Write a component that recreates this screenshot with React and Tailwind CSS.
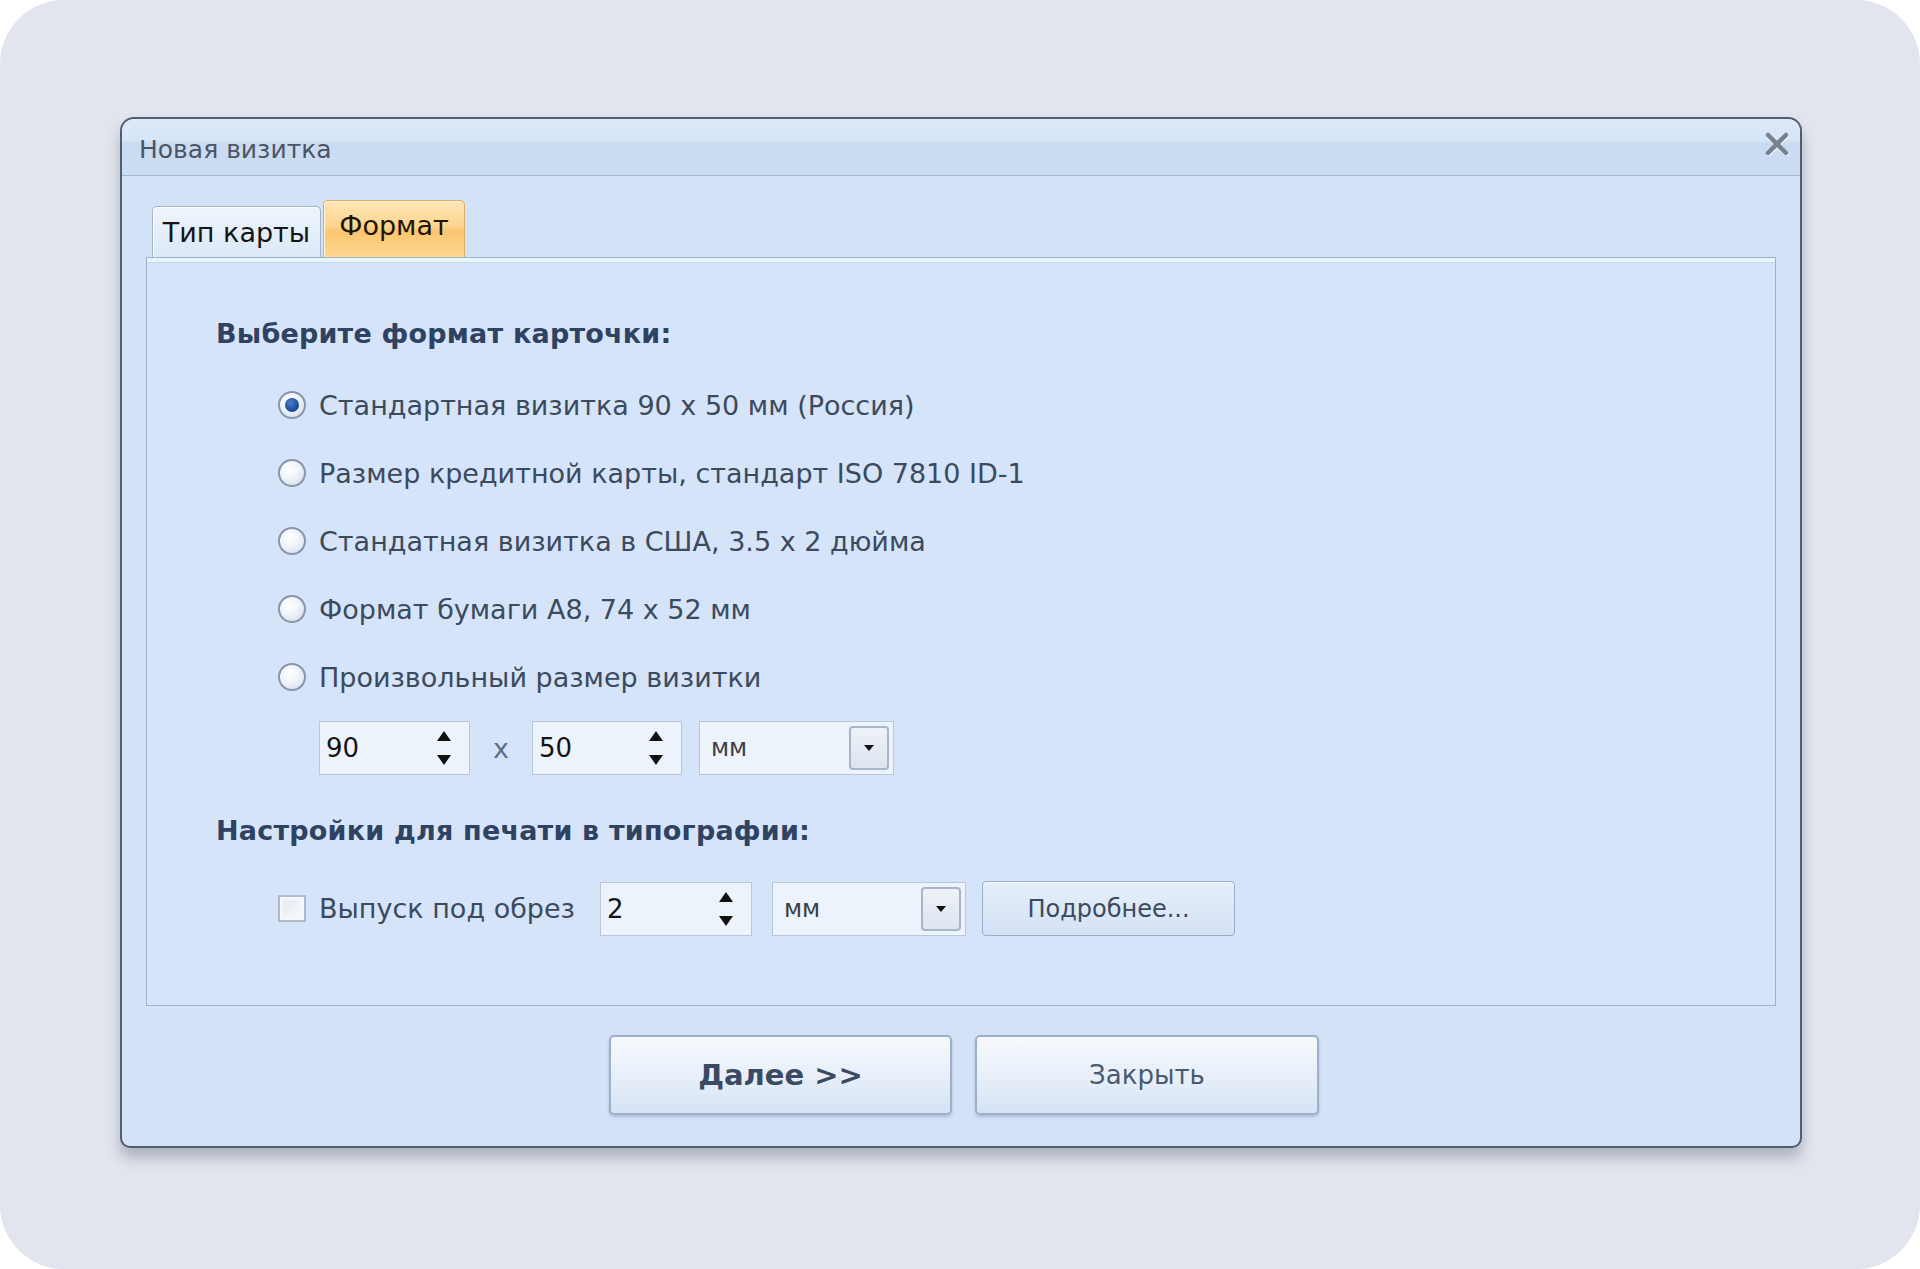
import React from "react";

const UI = { fontFamily: '"DejaVu Sans", Verdana, sans-serif' };

function Radio({ checked }) {
  return (
    <div className="w-[28px] h-[28px] rounded-full border-[2px] border-[#8796aa] bg-[radial-gradient(circle_at_40%_35%,#ffffff_0%,#eef3f9_45%,#cfd9e6_100%)] flex items-center justify-center shrink-0">
      {checked && (
        <div className="w-[14px] h-[14px] rounded-full bg-[radial-gradient(circle_at_40%_35%,#4f7fd0_0%,#1d4c9c_60%,#163d80_100%)]" />
      )}
    </div>
  );
}

function Checkbox() {
  return (
    <div className="w-[28px] h-[27px] border-[2px] border-[#b2bbc7] bg-[#f4f7fb] p-[3px] shrink-0">
      <div className="w-full h-full bg-[linear-gradient(135deg,#e4ebf3,#f7f9fc)]" />
    </div>
  );
}

function SpinArrows() {
  return (
    <svg width="18" height="38" viewBox="0 0 18 38" className="shrink-0">
      <path d="M9 2 L16 12 L2 12 Z" fill="#111" />
      <path d="M2 26 L16 26 L9 36 Z" fill="#111" />
    </svg>
  );
}

function Spin({ value, width }) {
  return (
    <div
      className={`h-[54px] ${width} border border-[#b7c6d9] bg-[#edf3fb] flex items-center justify-between pl-[6px] pr-[16px]`}
    >
      <span className="text-[26px] text-[#141414] leading-none">{value}</span>
      <SpinArrows />
    </div>
  );
}

function Combo({ value, width }) {
  return (
    <div
      className={`h-[54px] ${width} border border-[#b7c6d9] bg-[#edf3fb] flex items-center justify-between pl-[11px] pr-[4px]`}
    >
      <span className="text-[24px] text-[#3a3f48] leading-none">{value}</span>
      <div className="w-[40px] h-[44px] rounded-[4px] border-[2px] border-[#a9b6c7] bg-[linear-gradient(#eef2f8,#dde5ef)] flex items-center justify-center">
        <svg width="10" height="6" viewBox="0 0 10 6">
          <path d="M0 0 L10 0 L5 6 Z" fill="#111" />
        </svg>
      </div>
    </div>
  );
}

const options = [
  { label: "Стандартная визитка 90 x 50 мм (Россия)", checked: true },
  { label: "Размер кредитной карты, стандарт ISO 7810 ID-1" },
  { label: "Стандатная визитка в США, 3.5 x 2 дюйма" },
  { label: "Формат бумаги А8, 74 x 52 мм" },
  { label: "Произвольный размер визитки" },
];

export default function App() {
  return (
    <div className="w-[1920px] h-[1269px] bg-white" style={UI}>
      <div className="w-full h-full rounded-[64px] bg-[#e2e5ee] pt-[117px] pl-[120px]">
        {/* window */}
        <div className="w-[1682px] h-[1031px] rounded-t-[14px] rounded-b-[10px] border-[2px] border-[#4f5e74] bg-[#d3e2f6] shadow-[0_10px_14px_rgba(40,50,70,0.28)] flex flex-col overflow-hidden">
          {/* title bar */}
          <div className="h-[57px] shrink-0 border-b border-[#a3b6cf] bg-[linear-gradient(#dde9f8_0%,#d6e5f7_38%,#c9dbf2_44%,#cddef3_100%)] flex items-center justify-between pl-[17px] pr-[11px]">
            <span className="mt-[4px] text-[25px] text-[#4b5565] leading-none">Новая визитка</span>
            <svg width="24" height="24" viewBox="0 0 24 24" className="mb-[6px]">
              <path d="M3 3 L21 21 M21 3 L3 21" stroke="#ffffff" strokeOpacity="0.7" strokeWidth="5" strokeLinecap="round" transform="translate(0.5 1)" />
              <path d="M3 3 L21 21 M21 3 L3 21" stroke="#78818f" strokeWidth="4.5" strokeLinecap="round" />
            </svg>
          </div>

          {/* body */}
          <div className="flex-1 flex flex-col px-[24px] pt-[24px] pb-[31px]">
            {/* tabs */}
            <div className="h-[57px] flex items-end pl-[6px] shrink-0">
              <div className="h-[51px] w-[169px] rounded-t-[5px] border border-b-0 border-[#a2b4cb] bg-[linear-gradient(#eef5fc,#dbe8f7)] shadow-[inset_1px_1px_0_#ffffff] flex items-center justify-center">
                <span className="text-[27px] text-[#151515] leading-none">Тип карты</span>
              </div>
              <div className="h-[57px] w-[142px] ml-[2px] rounded-t-[5px] border border-b-0 border-[#e3aa5e] bg-[linear-gradient(#fde6b6_0%,#fcd58f_45%,#fbc56f_55%,#fdd892_100%)] shadow-[inset_1px_1px_0_#fff4dc] flex items-start justify-center pt-[11px]">
                <span className="text-[27px] text-[#231505] leading-none">Формат</span>
              </div>
            </div>

            {/* tab page */}
            <div className="h-[749px] shrink-0 border border-[#9fb2cb] bg-[#d5e4f8] shadow-[inset_0_4px_0_#e7f5fd,inset_0_5px_0_#c5d9ee] flex flex-col pl-[69px] pt-[55px]">
              <div className="h-[40px] flex items-center">
                <span className="text-[27px] font-bold tracking-[0.2px] text-[#2f4262] leading-none">
                  Выберите формат карточки:
                </span>
              </div>

              <div className="mt-[18px] flex flex-col pl-[62px]">
                {options.map((o) => (
                  <div key={o.label} className="h-[68px] flex items-center gap-[13px]">
                    <Radio checked={o.checked} />
                    <span className="text-[27px] text-[#3c4a5e] leading-none">{o.label}</span>
                  </div>
                ))}
              </div>

              <div className="mt-[10px] flex items-center pl-[103px]">
                <Spin value="90" width="w-[151px]" />
                <span className="w-[62px] text-center text-[27px] text-[#5d6f88] leading-none">x</span>
                <Spin value="50" width="w-[150px]" />
                <div className="w-[17px]" />
                <Combo value="мм" width="w-[195px]" />
              </div>

              <div className="mt-[35px] h-[40px] flex items-center">
                <span className="text-[27px] font-bold tracking-[0.2px] text-[#2f4262] leading-none">
                  Настройки для печати в типографии:
                </span>
              </div>

              <div className="mt-[31px] h-[55px] flex items-center pl-[62px]">
                <Checkbox />
                <span className="ml-[13px] w-[281px] text-[27px] text-[#3c4a5e] leading-none">
                  Выпуск под обрез
                </span>
                <Spin value="2" width="w-[152px]" />
                <div className="w-[20px]" />
                <Combo value="мм" width="w-[194px]" />
                <div className="w-[16px]" />
                <div className="h-[55px] w-[253px] rounded-[4px] border border-[#9aaec8] bg-[linear-gradient(#e6effa,#d4e2f5)] shadow-[inset_0_1px_0_#f4f8fd] flex items-center justify-center">
                  <span className="text-[24px] text-[#3b4a5d] leading-none">Подробнее...</span>
                </div>
              </div>
            </div>

            {/* dialog buttons */}
            <div className="mt-[29px] flex justify-center gap-[23px] pl-[6px]">
              <div className="h-[80px] w-[343px] rounded-[5px] border-[2px] border-[#9db0c9] bg-[linear-gradient(#f6f9fd_0%,#e8eff9_50%,#d5e3f5_100%)] shadow-[0_2px_3px_rgba(60,80,110,0.25)] flex items-center justify-center">
                <span className="text-[29px] font-bold text-[#3a4a62] leading-none">Далее &gt;&gt;</span>
              </div>
              <div className="h-[80px] w-[344px] rounded-[5px] border-[2px] border-[#9db0c9] bg-[linear-gradient(#f6f9fd_0%,#e8eff9_50%,#d5e3f5_100%)] shadow-[0_2px_3px_rgba(60,80,110,0.25)] flex items-center justify-center">
                <span className="text-[26px] text-[#4a5a70] leading-none">Закрыть</span>
              </div>
            </div>
          </div>
        </div>
      </div>
    </div>
  );
}
